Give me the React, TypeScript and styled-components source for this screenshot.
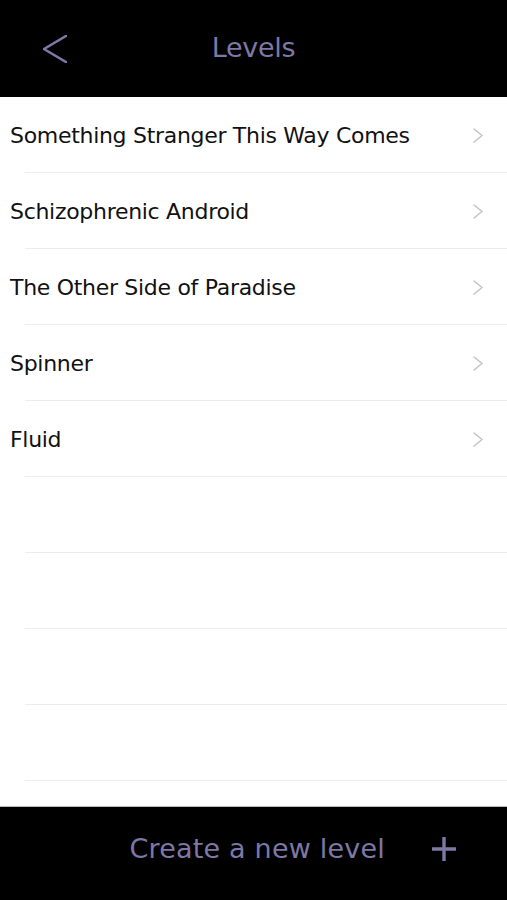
import styled, { createGlobalStyle } from "styled-components"

const levels = [
  "Something Stranger This Way Comes",
  "Schizophrenic Android",
  "The Other Side of Paradise",
  "Spinner",
  "Fluid",
]

const GlobalStyle = createGlobalStyle`
  html, body {
    margin: 0;
    padding: 0;
    background: #000;
  }
  * {
    box-sizing: border-box;
  }
`

const Screen = styled.div`
  width: 507px;
  height: 900px;
  display: flex;
  flex-direction: column;
  background: #fff;
  font-family: "DejaVu Sans", Verdana, sans-serif;
  overflow: hidden;
`

const TopBar = styled.header`
  height: 97px;
  flex: none;
  background: #000;
  display: grid;
  grid-template-columns: 100px 1fr 100px;
  align-items: center;
  color: #7d78a6;
`

const BackButton = styled.button`
  border: none;
  background: none;
  padding: 0 0 0 43px;
  display: flex;
  align-items: center;
  cursor: pointer;
`

const Title = styled.h1`
  margin: 0;
  text-align: center;
  font-weight: normal;
  font-size: 27px;
  letter-spacing: -0.3px;
  padding-bottom: 2px;
`

const List = styled.ul`
  flex: 1;
  margin: 0;
  padding: 0;
  list-style: none;
  overflow: hidden;
`

const Row = styled.li`
  height: 76px;
  display: flex;
  align-items: center;
  justify-content: space-between;
  padding: 0 24px 0 10px;
  position: relative;

  &::after {
    content: "";
    position: absolute;
    left: 25px;
    right: 0;
    bottom: 0;
    height: 1px;
    background: #ececec;
  }
`

const Label = styled.span`
  font-size: 22px;
  color: #111;
  letter-spacing: -0.3px;
`

const BottomBar = styled.footer`
  height: 94px;
  flex: none;
  background: #000;
  border-top: 1px solid #b9b9bd;
  display: flex;
  align-items: center;
  justify-content: flex-end;
  gap: 46px;
  padding: 0 50px 10px 0;
  color: #7d78a6;
`

const CreateLabel = styled.span`
  font-size: 27px;
  letter-spacing: 0.2px;
`

const Chevron = ({ w, h, color, stroke, dir }: { w: number; h: number; color: string; stroke: number; dir: "left" | "right" }) => (
  <svg width={w} height={h} viewBox={`0 0 ${w} ${h}`} fill="none">
    <path
      d={
        dir === "left"
          ? `M${w - 1} 1 L1 ${h / 2} L${w - 1} ${h - 1}`
          : `M1 1 L${w - 1} ${h / 2} L1 ${h - 1}`
      }
      stroke={color}
      strokeWidth={stroke}
      strokeLinecap="round"
      strokeLinejoin="round"
    />
  </svg>
)

export default function App() {
  return (
    <>
      <GlobalStyle />
      <Screen>
        <TopBar>
          <BackButton aria-label="Back">
            <Chevron w={24} h={28} color="#7d78a6" stroke={2.6} dir="left" />
          </BackButton>
          <Title>Levels</Title>
          <div />
        </TopBar>
        <List>
          {Array.from({ length: 10 }, (_, i) => (
            <Row key={i}>
              <Label>{levels[i] ?? ""}</Label>
              {levels[i] && <Chevron w={10} h={15} color="#c3c3c3" stroke={1.5} dir="right" />}
            </Row>
          ))}
        </List>
        <BottomBar>
          <CreateLabel>Create a new level</CreateLabel>
          <svg width="26" height="26" viewBox="0 0 26 26">
            <path d="M13 1 V25 M1 13 H25" stroke="#7d78a6" strokeWidth="3.4" />
          </svg>
        </BottomBar>
      </Screen>
    </>
  )
}
